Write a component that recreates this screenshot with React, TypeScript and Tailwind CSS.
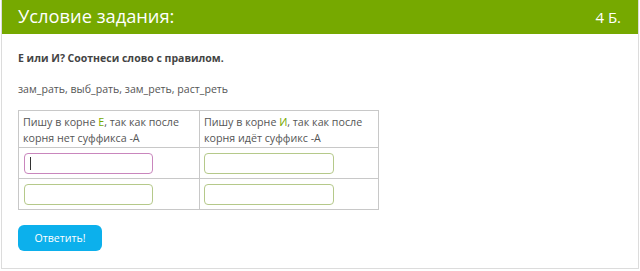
import React from "react";

export default function App() {
  return (
    <div className="w-[640px] h-[271px] bg-white" style={{ fontFamily: '"Open Sans", "Noto Sans", sans-serif' }}>
      <div className="ml-[1px] w-[638px] h-[269px] border border-[#dcdcdc] border-t-0 flex flex-col bg-white">
        <div className="h-[34px] bg-[#76a900] flex items-center justify-between pl-[16px] pr-[17px] text-white">
          <span className="text-[18.3px] leading-none mt-[-1px]">Условие задания:</span>
          <span className="text-[15px] leading-none">4 Б.</span>
        </div>
        <div className="pl-[16px] pt-[16px] flex flex-col text-[#555]">
          <div className="text-[10.5px] font-bold text-[#444] leading-[16px]">Е или И? Соотнеси слово с правилом.</div>
          <div className="text-[10.6px] leading-[16px] mt-[15px]">зам_рать, выб_рать, зам_реть, раст_реть</div>
          <table className="mt-[13px] w-[361px] border-collapse border border-[#c8c8c8] text-[10.7px] text-[#555] table-fixed">
            <tbody>
              <tr>
                <td className="border border-[#c8c8c8] align-top px-[4px] pt-[3px] pb-[1px] leading-[16px] w-[181px]">
                  Пишу в корне <span className="text-[#76a900]">Е</span>, так как после корня нет суффикса -А
                </td>
                <td className="border border-[#c8c8c8] align-top px-[4px] pt-[3px] pb-[1px] leading-[16px]">
                  Пишу в корне <span className="text-[#76a900]">И</span>, так как после корня идёт суффикс -А
                </td>
              </tr>
              <tr>
                <td className="border border-[#c8c8c8] h-[31px] px-[5px] py-0">
                  <div className="w-[129px] h-[21px] rounded-[4px] border border-[#c986bd] flex items-center pl-[5px]">
                    <div className="w-px h-[13px] bg-[#333]" />
                  </div>
                </td>
                <td className="border border-[#c8c8c8] px-[4px] py-0">
                  <div className="w-[130px] h-[21px] rounded-[4px] border border-[#b5c98a]" />
                </td>
              </tr>
              <tr>
                <td className="border border-[#c8c8c8] h-[31px] px-[5px] py-0">
                  <div className="w-[129px] h-[21px] rounded-[4px] border border-[#b5c98a]" />
                </td>
                <td className="border border-[#c8c8c8] px-[4px] py-0">
                  <div className="w-[130px] h-[21px] rounded-[4px] border border-[#b5c98a]" />
                </td>
              </tr>
            </tbody>
          </table>
          <button className="mt-[15px] w-[84px] h-[26px] rounded-[6px] bg-[#0cb0ec] text-white text-[10.6px] leading-none">
            Ответить!
          </button>
        </div>
      </div>
    </div>
  );
}
